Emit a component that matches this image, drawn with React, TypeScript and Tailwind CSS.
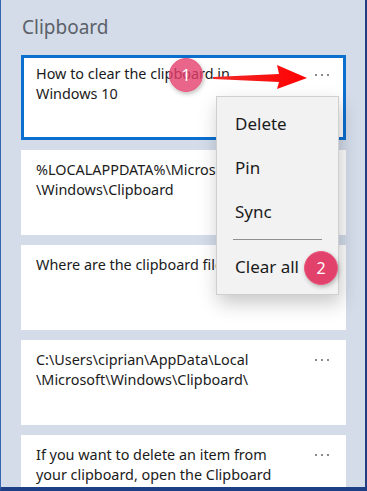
import React from "react";

const font = { fontFamily: '"Noto Sans", "Open Sans", sans-serif' };

function Dots() {
  return (
    <div className="absolute right-[17px] top-[19px] flex gap-[4px]">
      <span className="w-[2px] h-[2px] bg-[#8a8a8a]" />
      <span className="w-[2px] h-[2px] bg-[#8a8a8a]" />
      <span className="w-[2px] h-[2px] bg-[#8a8a8a]" />
    </div>
  );
}

function Card({ lines, selected, dots = true }: { lines: string[]; selected?: boolean; dots?: boolean }) {
  return (
    <div
      className={
        "relative h-[85px] shrink-0 bg-white pl-[15px] pr-[40px] text-[14.4px] leading-[20px] text-[#1b1b1b] " +
        (selected ? "ring-[3px] ring-inset ring-[#0b6fd0] pt-[9px]" : "pt-[10px]")
      }
    >
      {lines.map((l, i) => (
        <div key={i} className="whitespace-nowrap">{l}</div>
      ))}
      {dots && <Dots />}
    </div>
  );
}

export default function App() {
  return (
    <div
      className="relative w-[367px] h-[491px] overflow-hidden bg-[#d4dcea] border-l border-l-[#3566b0] border-r-2 border-r-[#1f3f80] border-b-4 border-b-[#1d3f86]"
      style={font}
    >
      <div className="pl-[21px] pt-[14px] text-[19px] leading-[26px] text-[#5b6169]">Clipboard</div>
      <div className="flex flex-col gap-[10px] pl-[20px] pr-[19px] pt-[15px]">
        <Card selected lines={["How to clear the clipboard in", "Windows 10"]} />
        <Card dots={false} lines={["%LOCALAPPDATA%\\Micros", "\\Windows\\Clipboard"]} />
        <Card dots={false} lines={["Where are the clipboard file"]} />
        <Card lines={["C:\\Users\\ciprian\\AppData\\Local", "\\Microsoft\\Windows\\Clipboard\\"]} />
        <Card lines={["If you want to delete an item from", "your clipboard, open the Clipboard"]} />
      </div>

      {/* context menu */}
      <div className="absolute left-[215px] top-[96px] w-[123px] h-[199px] bg-[#f2f2f2] border border-[#cfcfcf] shadow-[2px_8px_18px_rgba(0,0,0,0.22)] pt-[5px] text-[17px] text-[#1b1b1b]">
        <div className="h-[44px] flex items-center pl-[18px]">Delete</div>
        <div className="h-[44px] flex items-center pl-[18px]">Pin</div>
        <div className="h-[44px] flex items-center pl-[18px]">Sync</div>
        <div className="h-[11px] flex items-center px-[16px]">
          <div className="h-px w-full bg-[#8f8f8f]" />
        </div>
        <div className="h-[44px] flex items-center pl-[18px]">Clear all</div>
      </div>

      {/* arrow */}
      <svg className="absolute left-0 top-0" width="367" height="491" viewBox="0 0 367 491">
        <defs>
          <linearGradient id="ag" x1="0" y1="0" x2="1" y2="0">
            <stop offset="0" stopColor="#f22a2a" />
            <stop offset="1" stopColor="#ff0000" />
          </linearGradient>
        </defs>
        <polygon points="212,77 278,74 276,65 306,78 276,89 278,82 212,79" fill="url(#ag)" />
      </svg>

      {/* badge 1 */}
      <div className="absolute left-[168px] top-[58px] w-[34px] h-[34px] rounded-full bg-[#e43f6b]/80 border border-[#e85a80] shadow-[1px_2px_4px_rgba(0,0,0,0.25)] flex items-center justify-center text-white text-[16px]">
        1
      </div>
      {/* badge 2 */}
      <div className="absolute left-[303px] top-[251px] w-[34px] h-[34px] rounded-full bg-[#e2416b] border border-[#ea5b80] shadow-[1px_2px_4px_rgba(0,0,0,0.25)] flex items-center justify-center text-white text-[16px]">
        2
      </div>
    </div>
  );
}
